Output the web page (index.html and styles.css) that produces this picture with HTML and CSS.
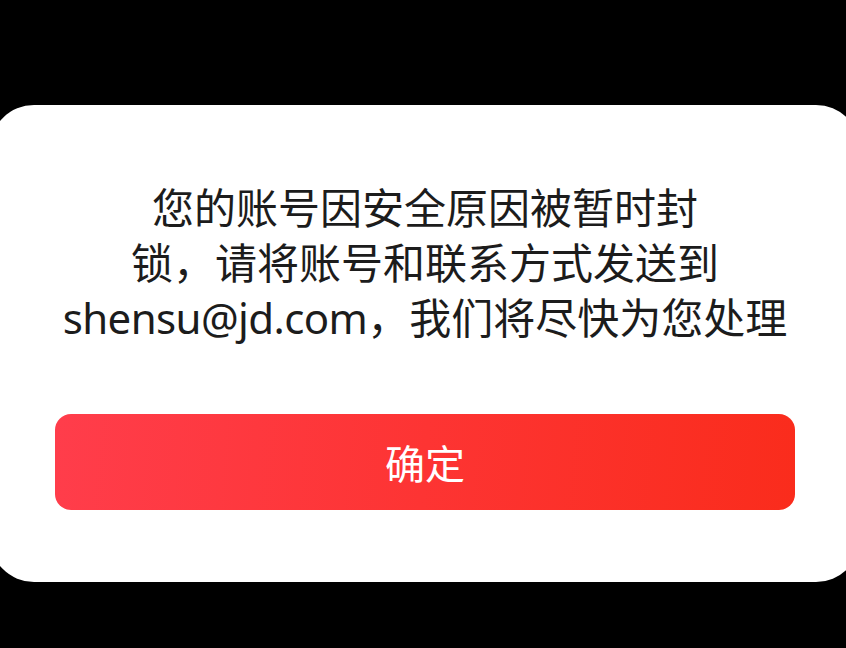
FILE: index.html
```html
<!DOCTYPE html>
<html lang="zh-CN">
<head>
<meta charset="utf-8">
<title>提示</title>
<link rel="stylesheet" href="styles.css">
</head>
<body>
<div class="dialog">
  <p class="message">
    <span class="line">您的账号因安全原因被暂时封</span>
    <span class="line">锁，请将账号和联系方式发送到</span>
    <span class="line"><span class="latin">shensu@jd.com</span>，我们将尽快为您处理</span>
  </p>
  <button class="confirm" type="button">确定</button>
</div>
</body>
</html>
```

FILE: styles.css
```css
html, body {
  margin: 0;
  padding: 0;
  background: #000;
  width: 846px;
  height: 648px;
  overflow: hidden;
}

.dialog {
  box-sizing: border-box;
  margin-top: 105px;
  margin-left: -10px;
  width: 870px;
  height: 477px;
  background: #fff;
  border-radius: 44px;
  padding: 73px 65px 0 65px;
  display: flex;
  flex-direction: column;
  align-items: stretch;
}

.message {
  margin: 0;
  font-family: "Noto Sans CJK SC", sans-serif;
  font-size: 42px;
  line-height: 55px;
  color: #1c1c1c;
  text-align: center;
}

.line {
  display: block;
  white-space: nowrap;
  height: 55px;
}

.latin {
  font-family: "Noto Sans", "Noto Sans CJK SC", sans-serif;
  letter-spacing: -0.6px;
  line-height: 1;
}

.confirm {
  margin-top: 71px;
  height: 96px;
  border: 0;
  border-radius: 16px;
  background: linear-gradient(95deg, #ff3d4b 0%, #fd3433 50%, #fa2c1c 100%);
  color: #fff;
  font-family: "Noto Sans CJK SC", sans-serif;
  font-size: 40px;
  padding: 0;
  cursor: pointer;
}
```
